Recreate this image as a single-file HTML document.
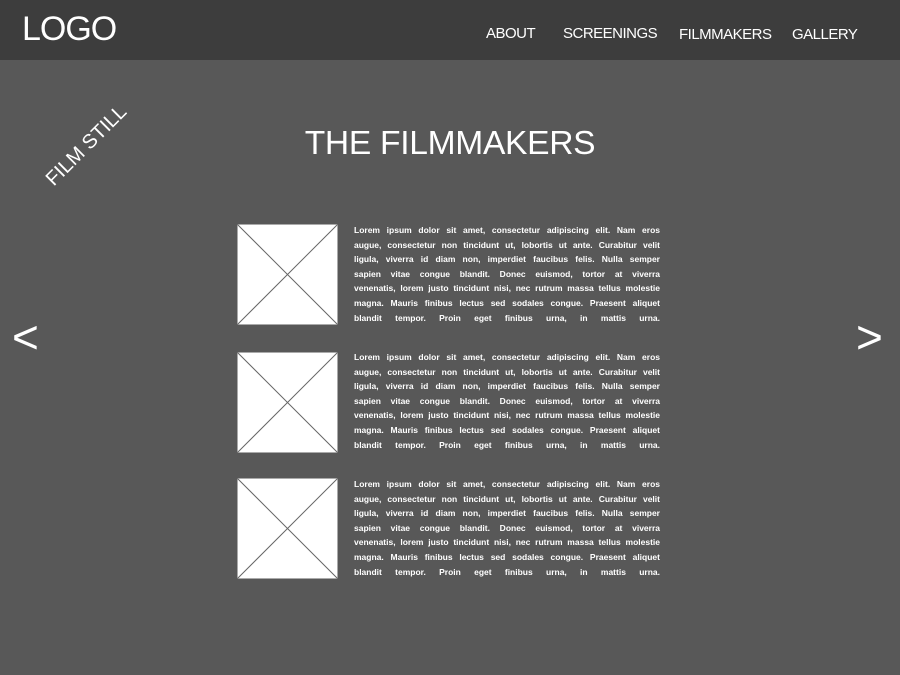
<!DOCTYPE html>
<html><head><style>
body{margin:0;width:900px;height:675px;background:#585858;font-family:"Liberation Sans",sans-serif;color:#fff;overflow:hidden;position:relative}
.hdr{position:absolute;left:0;top:0;width:900px;height:60px;background:#3d3d3d}
.logo{position:absolute;left:22px;top:10px;font-size:34px;letter-spacing:-1px}
.nav{position:absolute;top:25px;font-size:15px;letter-spacing:-0.5px}
h1{position:absolute;left:0;width:900px;top:125px;margin:0;text-align:center;font-weight:normal;font-size:33.6px;letter-spacing:-0.3px}
.still{position:absolute;font-size:20px;white-space:nowrap}
.arr{position:absolute;top:310px;font-size:46px;font-weight:normal}
.box{position:absolute;left:237px;width:101px;height:101px;background:#fff}
.txt{position:absolute;left:354px;width:306px;font-size:8.5px;font-weight:bold;letter-spacing:0;line-height:14.6px}
.txt div{text-align:justify;text-align-last:justify;white-space:nowrap;height:14.6px}
</style></head><body>
<div class="hdr">
<div class="logo">LOGO</div>
<div class="nav" style="left:486px">ABOUT</div>
<div class="nav" style="left:563px">SCREENINGS</div>
<div class="nav" style="left:679px;top:26px">FILMMAKERS</div>
<div class="nav" style="left:792px;top:26px">GALLERY</div>
</div>
<div class="still" style="left:58px;top:168px;transform:rotate(-45deg);transform-origin:left bottom">FILM STILL</div>
<h1>THE FILMMAKERS</h1>
<div class="arr" style="left:12px">&lt;</div>
<div class="arr" style="left:856px">&gt;</div>

<svg class="box" style="top:224px" viewBox="0 0 101 101"><rect x="0.5" y="0.5" width="100" height="100" fill="#fff" stroke="#aaa"/><path d="M0 0L101 101M101 0L0 101" stroke="#666" stroke-width="1"/></svg>
<svg class="box" style="top:352px" viewBox="0 0 101 101"><rect x="0.5" y="0.5" width="100" height="100" fill="#fff" stroke="#aaa"/><path d="M0 0L101 101M101 0L0 101" stroke="#666" stroke-width="1"/></svg>
<svg class="box" style="top:478px" viewBox="0 0 101 101"><rect x="0.5" y="0.5" width="100" height="100" fill="#fff" stroke="#aaa"/><path d="M0 0L101 101M101 0L0 101" stroke="#666" stroke-width="1"/></svg>

<div class="txt" style="top:223px">
<div>Lorem ipsum dolor sit amet, consectetur adipiscing elit. Nam eros</div>
<div>augue, consectetur non tincidunt ut, lobortis ut ante. Curabitur velit</div>
<div>ligula, viverra id diam non, imperdiet faucibus felis. Nulla semper</div>
<div>sapien vitae congue blandit. Donec euismod, tortor at viverra</div>
<div>venenatis, lorem justo tincidunt nisi, nec rutrum massa tellus molestie</div>
<div>magna. Mauris finibus lectus sed sodales congue. Praesent aliquet</div>
<div>blandit tempor. Proin eget finibus urna, in mattis urna.</div>
</div>
<div class="txt" style="top:350px">
<div>Lorem ipsum dolor sit amet, consectetur adipiscing elit. Nam eros</div>
<div>augue, consectetur non tincidunt ut, lobortis ut ante. Curabitur velit</div>
<div>ligula, viverra id diam non, imperdiet faucibus felis. Nulla semper</div>
<div>sapien vitae congue blandit. Donec euismod, tortor at viverra</div>
<div>venenatis, lorem justo tincidunt nisi, nec rutrum massa tellus molestie</div>
<div>magna. Mauris finibus lectus sed sodales congue. Praesent aliquet</div>
<div>blandit tempor. Proin eget finibus urna, in mattis urna.</div>
</div>
<div class="txt" style="top:477px">
<div>Lorem ipsum dolor sit amet, consectetur adipiscing elit. Nam eros</div>
<div>augue, consectetur non tincidunt ut, lobortis ut ante. Curabitur velit</div>
<div>ligula, viverra id diam non, imperdiet faucibus felis. Nulla semper</div>
<div>sapien vitae congue blandit. Donec euismod, tortor at viverra</div>
<div>venenatis, lorem justo tincidunt nisi, nec rutrum massa tellus molestie</div>
<div>magna. Mauris finibus lectus sed sodales congue. Praesent aliquet</div>
<div>blandit tempor. Proin eget finibus urna, in mattis urna.</div>
</div>
</body></html>
